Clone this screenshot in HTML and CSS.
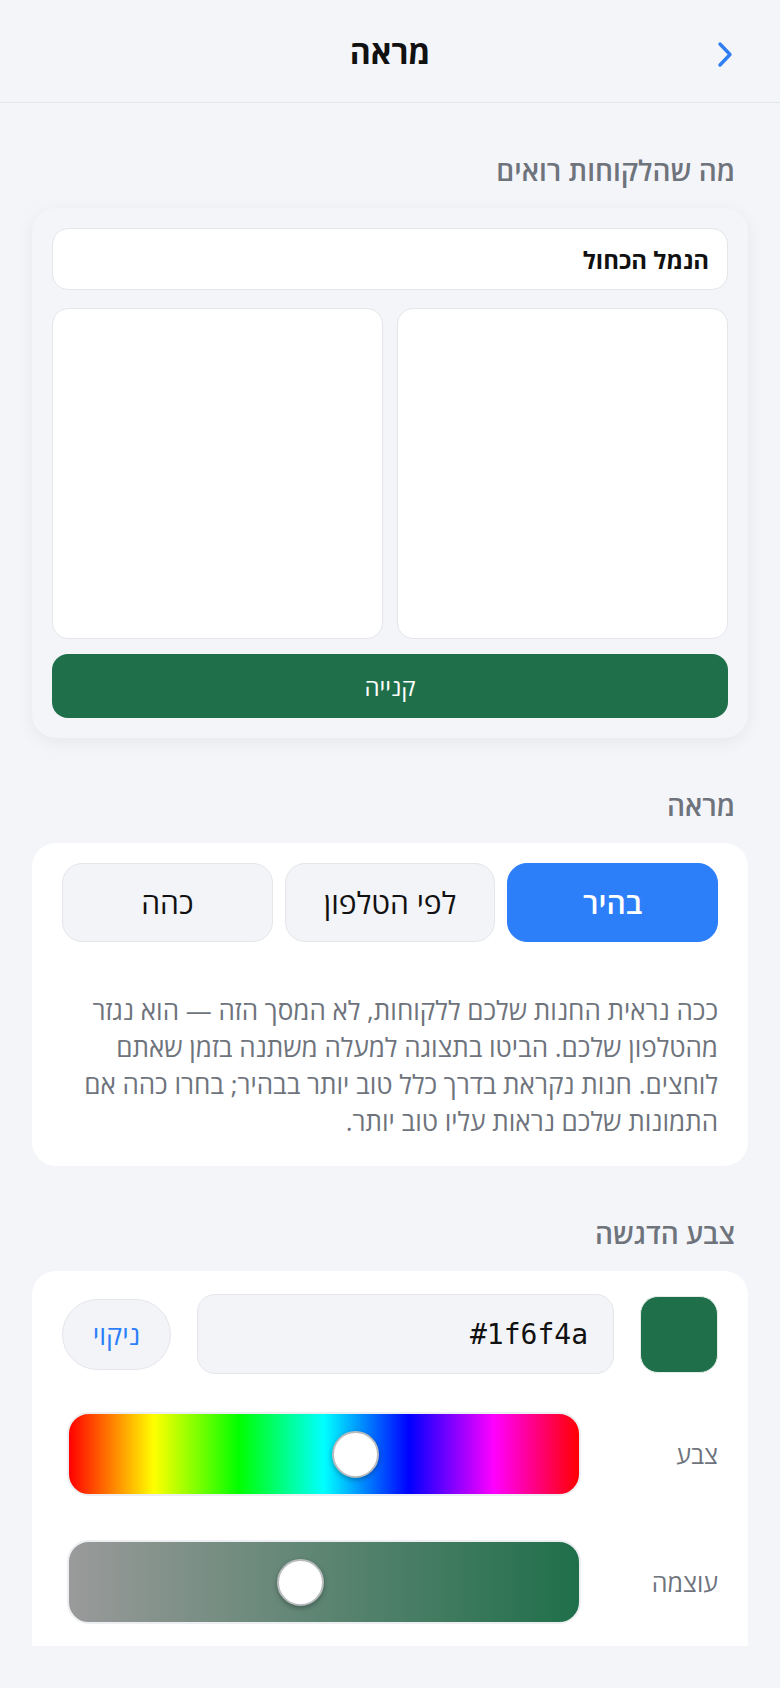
FILE: index.html
```html
<!DOCTYPE html>
<html lang="he" dir="rtl">
<head>
    <meta charset="UTF-8">
    <meta name="viewport" content="width=device-width, initial-scale=1.0">
    <title>מראה</title>
    <link rel="stylesheet" href="styles.css">
</head>
<body>
    <div class="screen">
        <header class="topbar">
            <button class="back" aria-label="חזרה">
                <svg width="16" height="27" viewBox="0 0 16 27">
                    <polyline points="3,3 13,13.5 3,24" fill="none" stroke="#2f7ff2" stroke-width="3.4" stroke-linecap="round" stroke-linejoin="round"/>
                </svg>
            </button>
            <h1>מראה</h1>
        </header>
        <main class="content">
            <h2 class="section-title">מה שהלקוחות רואים</h2>
            <section class="card preview">
                <div class="store-name">הנמל הכחול</div>
                <div class="tiles">
                    <div class="tile"></div>
                    <div class="tile"></div>
                </div>
                <button class="buy">קנייה</button>
            </section>

            <h2 class="section-title">מראה</h2>
            <section class="card theme">
                <div class="segments">
                    <button class="segment active">בהיר</button>
                    <button class="segment">לפי הטלפון</button>
                    <button class="segment">כהה</button>
                </div>
                <p class="hint">ככה נראית החנות שלכם ללקוחות, לא המסך הזה — הוא נגזר מהטלפון שלכם. הביטו בתצוגה למעלה משתנה בזמן שאתם לוחצים. חנות נקראת בדרך כלל טוב יותר בבהיר; בחרו כהה אם התמונות שלכם נראות עליו טוב יותר.</p>
            </section>

            <h2 class="section-title">צבע הדגשה</h2>
            <section class="card accent">
                <div class="accent-row">
                    <div class="swatch"></div>
                    <div class="hex-field">#1f6f4a</div>
                    <button class="clear">ניקוי</button>
                </div>
                <div class="slider-row hue-row">
                    <span class="slider-label">צבע</span>
                    <div class="slider hue"><span class="thumb" style="--pos: 56.2%"></span></div>
                </div>
                <div class="slider-row sat-row">
                    <span class="slider-label">עוצמה</span>
                    <div class="slider sat"><span class="thumb" style="--pos: 45.3%"></span></div>
                </div>
            </section>
        </main>
    </div>
</body>
</html>
```

FILE: styles.css
```css
body {
    margin: 0;
    background-color: #f3f5f9;
    font-family: "Open Sans", "DejaVu Sans", sans-serif;
    color: #111;
}
button {
    font-family: inherit;
    cursor: pointer;
}
.screen {
    height: 1646px;
    overflow: hidden;
}
.topbar {
    position: relative;
    height: 102px;
    border-bottom: 1px solid #e3e6eb;
    display: flex;
    align-items: center;
    justify-content: center;
}
.topbar h1 {
    margin: 0;
    font-size: 32px;
    font-weight: bold;
}
.back {
    position: absolute;
    right: 47px;
    top: 41px;
    padding: 0;
    border: none;
    background: none;
    line-height: 0;
}
.content {
    padding: 0 32px;
}
.section-title {
    margin: 52px 13px 23px;
    font-size: 28px;
    line-height: 30px;
    font-weight: 600;
    color: #6e737c;
}
.card {
    background-color: #fff;
    border-radius: 24px;
}
.preview {
    background-color: #f4f5f8;
    padding: 20px;
    box-shadow: 0 4px 18px rgba(0, 0, 0, 0.06);
}
.store-name {
    height: 60px;
    background-color: #fff;
    border: 1px solid #e4e6ea;
    border-radius: 16px;
    padding: 0 18px;
    display: flex;
    align-items: center;
    font-size: 24px;
    font-weight: bold;
}
.tiles {
    display: grid;
    grid-template-columns: 1fr 1fr;
    gap: 14px;
    margin-top: 18px;
}
.tile {
    aspect-ratio: 1;
    background-color: #fff;
    border: 1px solid #e4e6ea;
    border-radius: 16px;
}
.buy {
    display: block;
    width: 100%;
    height: 64px;
    margin-top: 15px;
    border: none;
    border-radius: 16px;
    background-color: #1f6f4a;
    color: #fff;
    font-size: 24px;
}
.theme {
    padding: 20px 30px 26px;
}
.segments {
    display: grid;
    grid-template-columns: repeat(3, 1fr);
    gap: 12px;
}
.segment {
    height: 79px;
    border: 1px solid #e4e6ea;
    border-radius: 20px;
    background-color: #f3f4f7;
    color: #111;
    font-size: 30px;
    font-weight: 500;
}
.segment.active {
    background-color: #2d7ff9;
    border-color: #2d7ff9;
    color: #fff;
    font-weight: 600;
}
.hint {
    margin: 50px 0 0;
    font-size: 26px;
    line-height: 37px;
    color: #6e737c;
}
.accent {
    padding: 23px 30px 60px;
}
.accent-row {
    display: flex;
    align-items: center;
    gap: 26px;
}
.swatch {
    width: 78px;
    height: 77px;
    border-radius: 18px;
    background-color: #1f6f4a;
    border: 1px solid #e4eee8;
    box-sizing: border-box;
}
.hex-field {
    flex: 1;
    height: 80px;
    box-sizing: border-box;
    border: 1px solid #e4e6ea;
    border-radius: 18px;
    background-color: #f3f4f7;
    padding: 0 25px;
    display: flex;
    align-items: center;
    justify-content: flex-end;
    direction: ltr;
    font-family: "DejaVu Sans Mono", monospace;
    font-size: 28px;
}
.clear {
    flex: 0 0 109px;
    height: 71px;
    padding: 0;
    border: 1px solid #e4e6ea;
    border-radius: 36px;
    background-color: #f3f4f7;
    color: #2d7ff9;
    font-size: 27px;
    font-weight: 500;
    text-align: center;
    font-variant-ligatures: none;
    font-feature-settings: "liga" 0, "clig" 0, "dlig" 0;
}
.slider-row {
    display: flex;
    align-items: center;
}
.hue-row {
    margin-top: 38px;
}
.sat-row {
    margin-top: 44px;
}
.slider-label {
    flex: 0 0 137px;
    font-size: 25px;
    color: #6e737c;
}
.slider {
    position: relative;
    flex: 0 0 514px;
    height: 84px;
    box-sizing: border-box;
    border: 2px solid #eceef1;
    border-radius: 22px;
}
.hue {
    background: linear-gradient(to right, #f00, #ff0, #0f0, #0ff, #00f, #f0f, #f00);
}
.sat {
    background: linear-gradient(to right, #9a9a9a, #1f6f4a);
}
.thumb {
    position: absolute;
    top: 50%;
    left: calc(var(--pos) - 23.5px);
    width: 47px;
    height: 47px;
    margin-top: -23.5px;
    box-sizing: border-box;
    border-radius: 50%;
    background-color: #fff;
    border: 2px solid #b9bcbf;
    box-shadow: 0 2px 5px rgba(0, 0, 0, 0.3);
}
```
